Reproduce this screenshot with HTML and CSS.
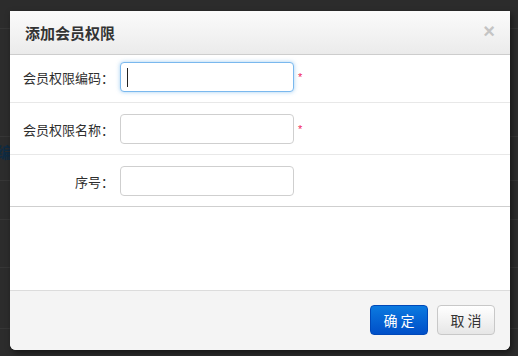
FILE: index.html
```html
<!DOCTYPE html>
<html lang="zh-CN">
<head>
  <meta charset="UTF-8" />
  <title>添加会员权限</title>
  <link rel="stylesheet" href="styles.css">
</head>
<body>

<!-- page behind the modal -->
<div class="page">
  <div class="page-row r1"></div>
  <div class="page-row r2"></div>
  <div class="page-row r3"><span class="page-text">编辑</span></div>
  <div class="page-row r4"></div>
  <div class="page-row r5"></div>
  <div class="page-row r6"></div>
</div>

<!-- Modal -->
<div class="modal">
  <div class="modal-header">
    <h3>添加会员权限</h3>
    <span class="close">×</span>
  </div>

  <div class="modal-body">
    <div class="form-row first">
      <label>会员权限编码：</label>
      <div class="field focus"><input type="text"></div>
      <span class="required">*</span>
    </div>
    <div class="form-row">
      <label>会员权限名称：</label>
      <div class="field"><input type="text"></div>
      <span class="required">*</span>
    </div>
    <div class="form-row last">
      <label>序号：</label>
      <div class="field"><input type="text"></div>
    </div>
  </div>

  <div class="modal-footer">
    <button class="btn btn-primary">确 定</button>
    <button class="btn">取 消</button>
  </div>
</div>

</body>
</html>
```

FILE: styles.css
```css
* { box-sizing: border-box; }
body {
  margin: 0;
  background: #2c2c2c;
  font-family: "Liberation Sans", "Noto Sans CJK SC", sans-serif;
  font-size: 13px;
  color: #333;
  overflow: hidden;
}

/* Page behind */
.page { height: 356px; }
.page-row { border-bottom: 1px solid #363636; }
.r1 { height: 29px; }
.r2 { height: 108px; }
.r3 { height: 38px; }
.r4 { height: 39px; }
.r5 { height: 48px; }
.r6 { height: 61px; }
.page-text {
  display: block;
  margin: 6px 0 0 -3px;
  font: bold 15px "Noto Sans CJK SC", sans-serif;
  line-height: 18px;
  color: #0f2b42;
}

/* Modal */
.modal {
  position: absolute;
  top: 11px;
  left: 10px;
  width: 500px;
  background: #fff;
  border-radius: 0 0 6px 6px;
  box-shadow: 2px 3px 6px rgba(0,0,0,0.5);
  overflow: hidden;
}

.modal-header {
  height: 44px;
  padding: 0 14px 0 15px;
  display: flex;
  align-items: center;
  justify-content: space-between;
  background: linear-gradient(#fbfbfb, #ebebeb);
  border-bottom: 1px solid #cdcdcd;
}
.modal-header h3 {
  margin: 0;
  font: bold 15px "Noto Sans CJK SC", sans-serif;
  color: #333;
}
.close {
  font: bold 20px "Liberation Sans", sans-serif;
  color: #c4c4c4;
  margin: -3px 1px 0 0;
}

.modal-body { height: 236px; border-bottom: 1px solid #dcdcdc; }

.form-row {
  display: flex;
  align-items: center;
  padding: 11px 0 10px;
  border-bottom: 1px solid #e8e8e8;
}
.form-row.first { padding-top: 7px; }
.form-row.last { border-bottom-color: #cfcfcf; }
.form-row label {
  width: 104px;
  margin-right: 6px;
  text-align: right;
  font-family: "Noto Sans CJK SC", sans-serif;
  font-size: 13px;
  color: #2e2e2e;
}

.field { position: relative; }
.field input {
  display: block;
  width: 174px;
  height: 30px;
  margin: 0;
  padding: 4px 6px;
  border: 1px solid #cfcfcf;
  border-radius: 4px;
  outline: none;
  background: #fff;
}
.field.focus input {
  border-color: #7ab8ee;
  box-shadow: 0 0 4px rgba(102,175,233,0.6);
}
.field.focus:after {
  content: "";
  position: absolute;
  left: 7px;
  top: 6px;
  width: 1px;
  height: 19px;
  background: #222;
}

.required {
  margin-left: 4px;
  margin-top: 0;
  color: #f0245a;
  font-size: 11px;
}

.modal-footer {
  height: 59px;
  padding: 14px 15px 0;
  display: flex;
  justify-content: flex-end;
  gap: 9px;
  background: #f4f4f4;
  align-items: flex-start;
}

.btn {
  width: 58px;
  height: 30px;
  padding: 0;
  border: 1px solid #c8c8c8;
  border-radius: 4px;
  background: linear-gradient(#ffffff, #e6e6e6);
  color: #333;
  font-family: "Noto Sans CJK SC", sans-serif;
  font-size: 14px;
  cursor: pointer;
}
.btn-primary {
  border-color: #0048b8;
  background: linear-gradient(#0b7ae0, #004fc8);
  color: #fff;
}
```
